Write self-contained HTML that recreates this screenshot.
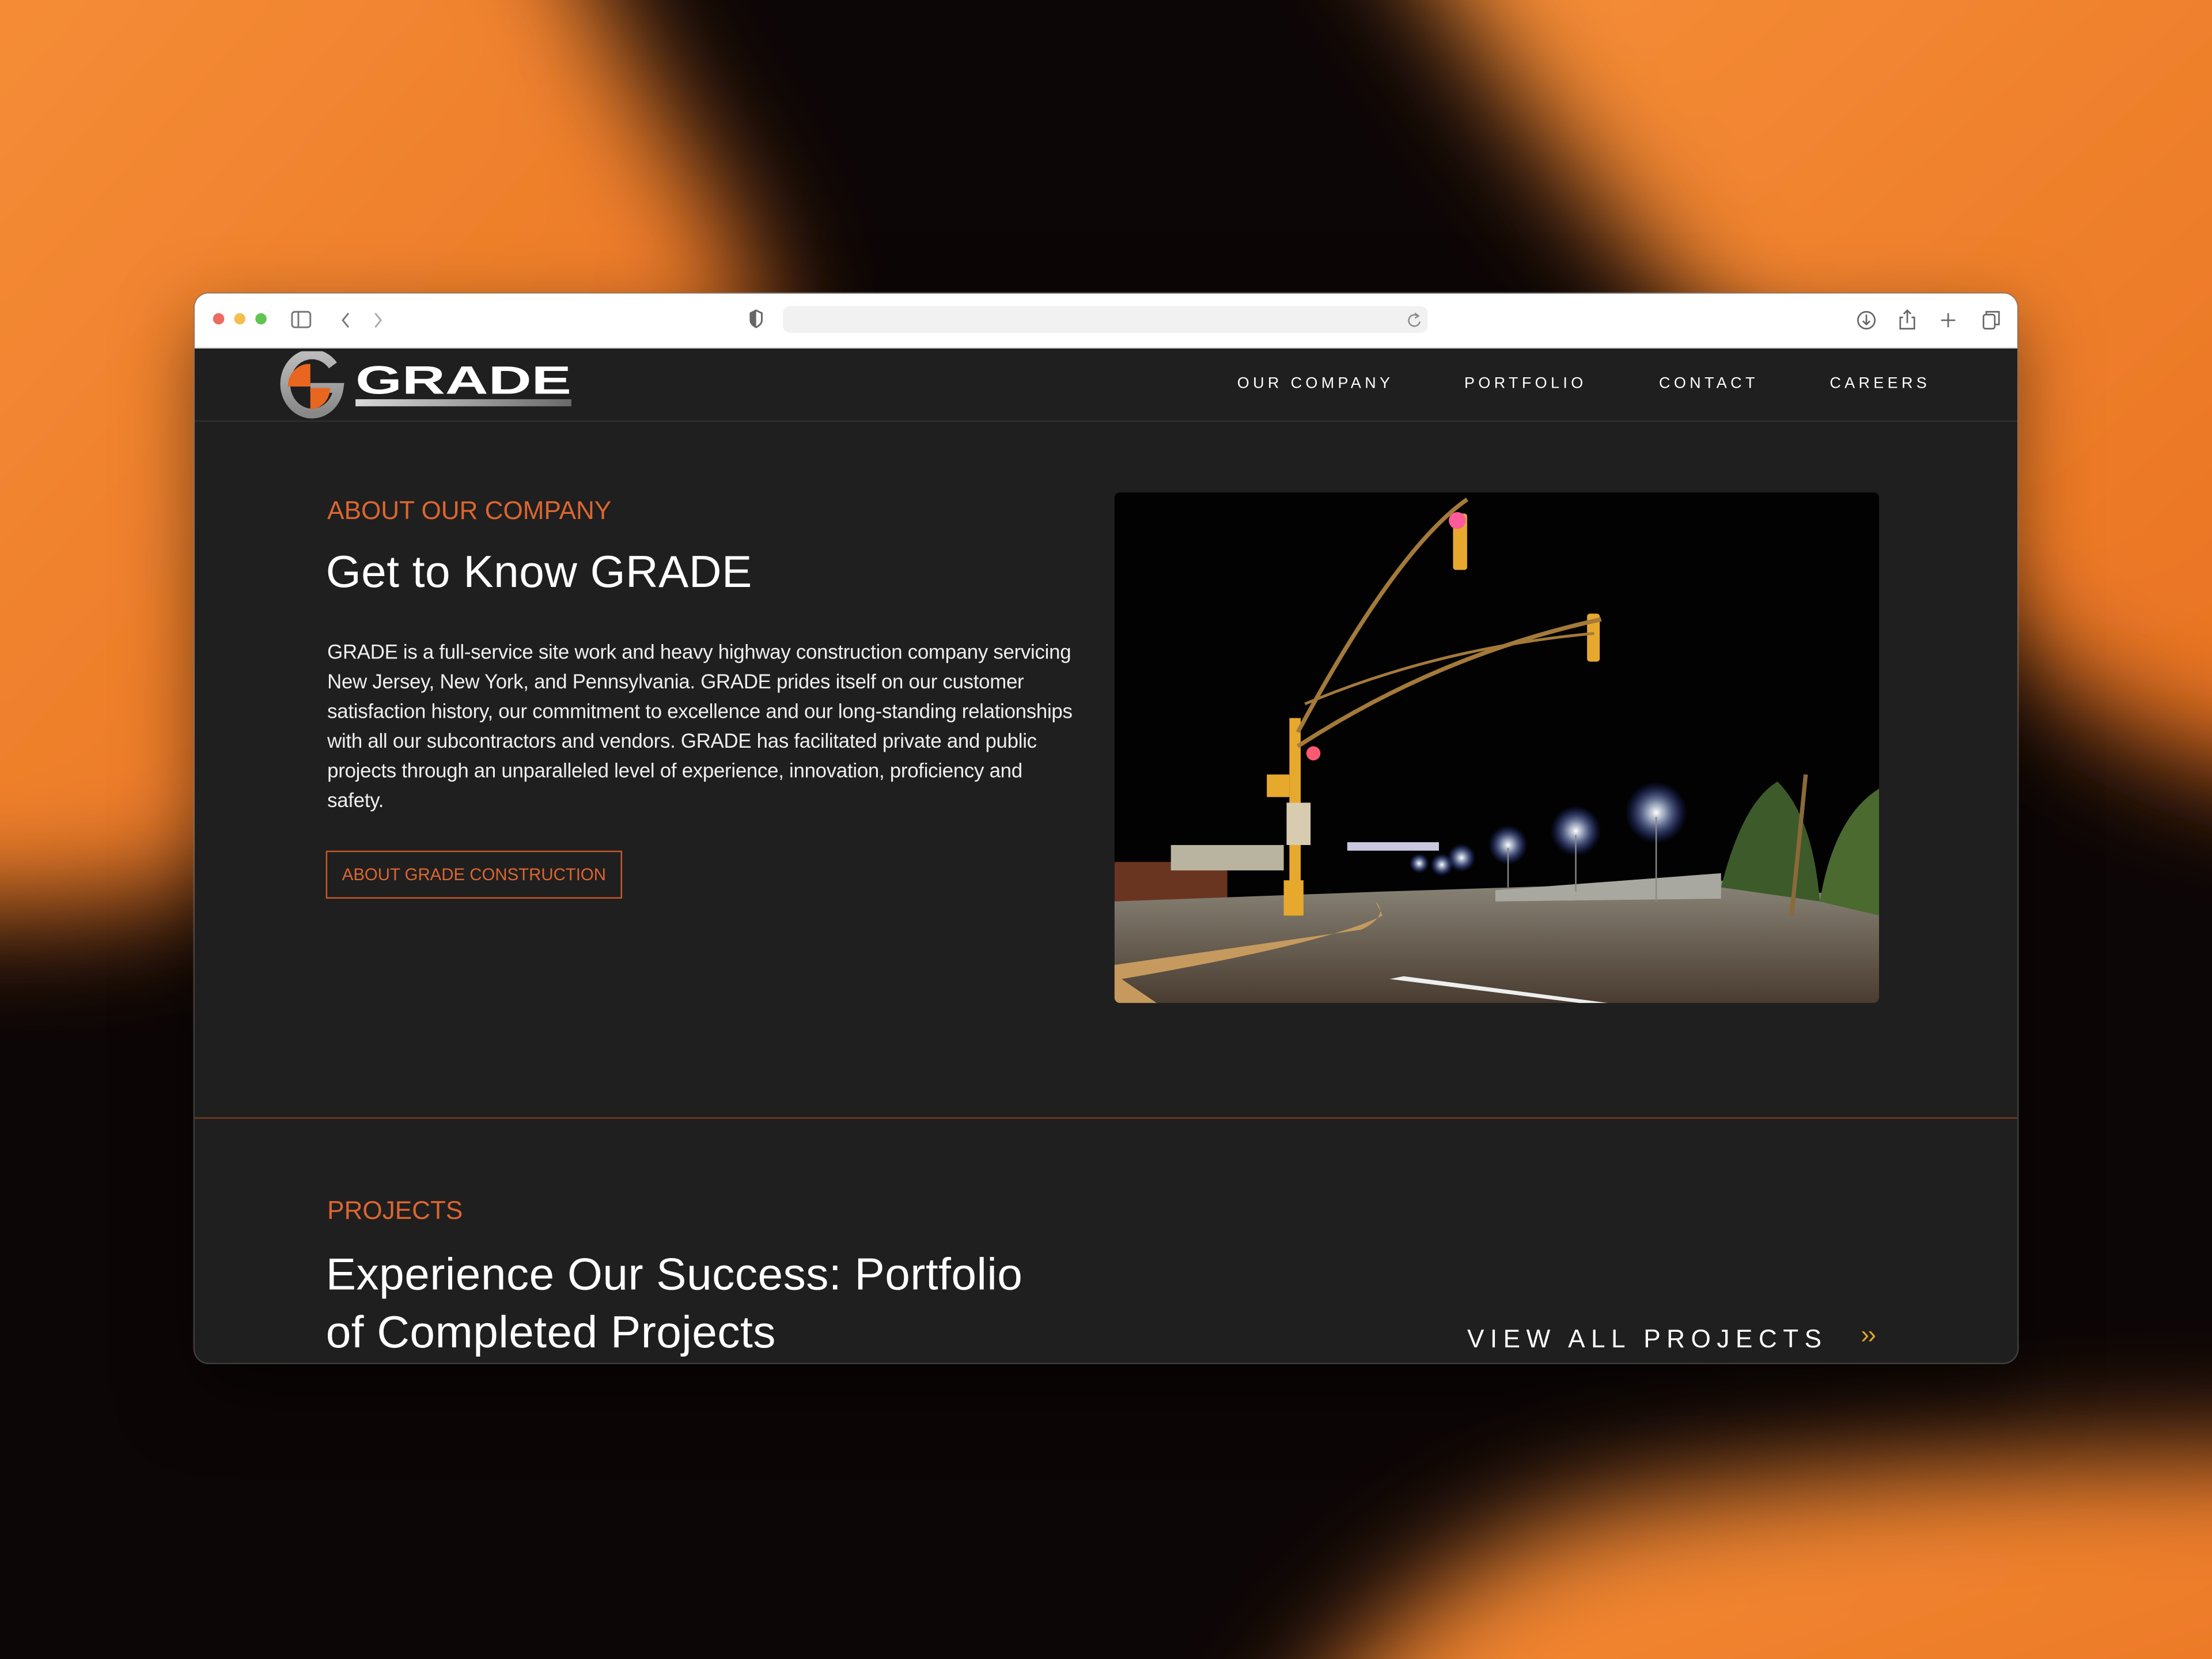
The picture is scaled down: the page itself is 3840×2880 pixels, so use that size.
<!DOCTYPE html>
<html><head><meta charset="utf-8"><style>
html,body{margin:0;padding:0;width:3840px;height:2880px;overflow:hidden;background:#0c0505;}
#w{position:absolute;left:0;top:0;width:1568px;height:1176px;overflow:hidden;transform:scale(2.44898);transform-origin:0 0;font-family:"Liberation Sans",sans-serif;}
.abs{position:absolute;}
.win{left:138px;top:208px;width:1292px;height:758px;border-radius:10px;overflow:hidden;background:#1f1f1f;box-shadow:0 0 0 1px rgba(120,120,120,.5),0 20px 60px rgba(0,0,0,.5);}
.tb{left:0;top:0;width:1292px;height:38px;background:#fff;border-bottom:1px solid #ddd;}
.dot{width:8px;height:8px;border-radius:50%;top:14px;}
.nav{top:58px;font-size:11px;letter-spacing:2.6px;color:#fff;white-space:nowrap;}
.or{color:#dd6630;}
.p{font-size:14.2px;color:#f0f0f0;white-space:nowrap;letter-spacing:-0.1px;}
.h{font-size:32px;color:#fff;white-space:nowrap;font-weight:normal;letter-spacing:0.2px;}
</style></head><body><div id="w">
<svg class="abs" style="left:0;top:0" width="1568" height="1176">
<defs><filter id="b" x="-30%" y="-30%" width="160%" height="160%"><feGaussianBlur stdDeviation="40"/></filter>
<linearGradient id="og" x1="0" y1="0" x2="1" y2="1"><stop offset="0" stop-color="#f7913a"/><stop offset="1" stop-color="#e8701f"/></linearGradient></defs>
<rect width="1568" height="1176" fill="#0d0606"/>
<g filter="url(#b)" fill="url(#og)">
<path d="M-100,-100 L380,-100 Q440,40 520,160 L560,300 L380,480 L240,600 Q100,660 -100,640 Z"/>
<path d="M960,-100 L1700,-100 L1700,560 Q1570,560 1480,500 L1320,380 Q1240,280 1170,190 Q1060,60 960,-100 Z"/>
<path d="M880,1300 Q970,1120 1130,1070 Q1300,1030 1700,1030 L1700,1300 Z"/>
</g>
</svg>
<div class="abs win">
 <div class="abs tb">
  <div class="abs dot" style="left:13px;background:#ec6a5e"></div>
  <div class="abs dot" style="left:28px;background:#f4bf4f"></div>
  <div class="abs dot" style="left:43px;background:#61c554"></div>
  <svg class="abs" style="left:68px;top:10px" width="140" height="18" fill="none" stroke="#777" stroke-width="1.2">
   <rect x="1" y="3" width="13" height="11" rx="2"/><line x1="5.5" y1="3" x2="5.5" y2="14"/>
   <path d="M41,4 L37,9 L41,14"/><path d="M60,4 L64,9 L60,14" stroke="#aaa"/>
  </svg>
  <svg class="abs" style="left:393px;top:11px" width="10" height="14"><path d="M5,1 L9,3 L9,8 Q9,11 5,13 Q1,11 1,8 L1,3Z" fill="none" stroke="#666" stroke-width="1.2"/><path d="M5,1 L1,3 L1,8 Q1,11 5,13Z" fill="#666"/></svg>
  <div class="abs" style="left:417px;top:9px;width:457px;height:19px;background:#f1f1f1;border-radius:5px;"></div>
  <svg class="abs" style="left:860px;top:13px" width="10" height="12"><path d="M7,3 A4,4 0 1 0 8.5,7" fill="none" stroke="#888" stroke-width="1"/><path d="M5,1 L7.5,3 L5,4.5" fill="none" stroke="#888" stroke-width="1"/></svg>
  <svg class="abs" style="left:1176px;top:10px" width="110" height="18" fill="none" stroke="#666" stroke-width="1.1">
   <circle cx="9" cy="9" r="6"/><path d="M9,5 L9,12 M6.5,9.5 L9,12 L11.5,9.5"/>
   <path d="M35,7 L33,7 L33,15 L43,15 L43,7 L41,7 M38,2 L38,11 M35.5,4.5 L38,2 L40.5,4.5"/>
   <path d="M67,4 L67,14 M62,9 L72,9"/>
   <rect x="92" y="5" width="8" height="10" rx="1.5"/><path d="M94,5 L94,3 L103,3 L103,12 L100,12"/>
  </svg>
 </div>
 <svg class="abs" style="left:58px;top:41px" width="220" height="48">
  <defs><linearGradient id="g1" x1="0" x2="1"><stop offset="0" stop-color="#d8d8d8"/><stop offset="1" stop-color="#6a6a6a"/></linearGradient>
  <linearGradient id="g2" x1="0" x2="0" y1="0" y2="1"><stop offset="0" stop-color="#bbb"/><stop offset="1" stop-color="#888"/></linearGradient></defs>
  <path d="M40,10 A19,21 0 1 0 44,26 L24,26" fill="none" stroke="url(#g2)" stroke-width="7"/>
  <path d="M24,9 A15,16 0 0 0 8,25 L24,25Z" fill="#e8661f"/>
  <path d="M24,26 L38,26 A14,15 0 0 1 24,41Z" fill="#e8661f"/>
  <text x="56" y="30" font-family="Liberation Sans" font-weight="bold" font-size="28" fill="#fff" textLength="153" lengthAdjust="spacingAndGlyphs">GRADE</text>
  <rect x="56" y="34" width="153" height="5" fill="url(#g1)"/>
 </svg>
 <div class="abs nav" style="left:739px">OUR COMPANY</div>
 <div class="abs nav" style="left:900px">PORTFOLIO</div>
 <div class="abs nav" style="left:1038px">CONTACT</div>
 <div class="abs nav" style="left:1159px">CAREERS</div>
 <div class="abs" style="left:0;top:90px;width:1292px;height:1px;background:#2e2e2e"></div>

 <div class="abs or" style="left:94px;top:144px;font-size:18px;white-space:nowrap">ABOUT OUR COMPANY</div>
 <div class="abs h" style="left:93px;top:179px">Get to Know GRADE</div>
 <div class="abs" style="left:94px;top:245px;line-height:20.9px">
  <div class="p">GRADE is a full-service site work and heavy highway construction company servicing</div>
  <div class="p">New Jersey, New York, and Pennsylvania. GRADE prides itself on our customer</div>
  <div class="p">satisfaction history, our commitment to excellence and our long-standing relationships</div>
  <div class="p">with all our subcontractors and vendors. GRADE has facilitated private and public</div>
  <div class="p">projects through an unparalleled level of experience, innovation, proficiency and</div>
  <div class="p">safety.</div>
 </div>
 <div class="abs or" style="left:93px;top:395px;width:208px;height:32px;border:1px solid #c8582a;font-size:12px;line-height:32px;text-align:center;white-space:nowrap">ABOUT GRADE CONSTRUCTION</div>

 <svg class="abs" style="left:652px;top:141px;border-radius:4px" width="542" height="362">
  <defs>
   <linearGradient id="rd" x1="0" y1="0" x2="0" y2="1"><stop offset="0" stop-color="#8a8578"/><stop offset="1" stop-color="#4a3c30"/></linearGradient>
   <radialGradient id="lt"><stop offset="0" stop-color="#fff"/><stop offset=".3" stop-color="#cfe0ff" stop-opacity=".7"/><stop offset="1" stop-color="#3050ff" stop-opacity="0"/></radialGradient>
  </defs>
  <rect width="542" height="362" fill="#020203"/>
  <path d="M0,262 L45,262 L80,258 L80,300 L0,300Z" fill="#6a3520"/>
  <rect x="40" y="250" width="80" height="18" fill="#b9b4a0"/>
  <path d="M0,290 L190,283 L440,275 L542,290 L542,362 L0,362Z" fill="url(#rd)"/>
  <path d="M185,290 Q195,300 175,310 L0,335 L0,362 L30,362 L5,345 Q150,320 190,300Z" fill="#c69a5e"/>
  <path d="M205,343 L350,362 L330,362 L195,345Z" fill="#eee"/>
  <path d="M270,282 L430,270 L430,288 L270,290Z" fill="#a8a8a0"/>
  <g fill="#e6a92e"><rect x="124" y="160" width="8" height="140"/><rect x="120" y="275" width="14" height="25"/>
   <rect x="240" y="15" width="10" height="40" rx="2"/><rect x="335" y="86" width="9" height="34" rx="2"/><rect x="108" y="200" width="16" height="16"/></g>
  <path d="M130,170 Q200,40 250,5" stroke="#a47a3a" stroke-width="3" fill="none"/>
  <path d="M130,180 Q230,115 345,90" stroke="#a47a3a" stroke-width="3" fill="none"/>
  <path d="M135,150 Q230,110 340,100" stroke="#a47a3a" stroke-width="2" fill="none"/>
  <circle cx="243" cy="20" r="6" fill="#ff5a9a"/><circle cx="141" cy="185" r="5" fill="#ff5a70"/>
  <rect x="122" y="220" width="17" height="30" fill="#d8ccb0"/>
  <g fill="url(#lt)"><circle cx="384" cy="227" r="22"/><circle cx="327" cy="240" r="18"/><circle cx="279" cy="250" r="14"/><circle cx="246" cy="259" r="10"/><circle cx="232" cy="264" r="8"/><circle cx="216" cy="263" r="7"/></g>
  <g stroke="#888" stroke-width="1"><line x1="384" y1="230" x2="384" y2="290"/><line x1="327" y1="243" x2="327" y2="283"/><line x1="279" y1="252" x2="279" y2="280"/></g>
  <path d="M430,280 Q445,220 470,205 Q495,230 500,290Z" fill="#3d5a2a"/>
  <path d="M500,290 Q510,230 542,210 L542,300Z" fill="#4a6a30"/>
  <line x1="480" y1="300" x2="490" y2="200" stroke="#8a6a3a" stroke-width="3"/>
  <rect x="165" y="248" width="65" height="6" fill="#c8c8e0"/>
 </svg>

 <div class="abs" style="left:0;top:584px;width:1292px;height:1px;background:#7a3a1e"></div>
 <div class="abs or" style="left:94px;top:640px;font-size:18px">PROJECTS</div>
 <div class="abs h" style="left:93px;top:675px;line-height:41px">Experience Our Success: Portfolio<br>of Completed Projects</div>
 <div class="abs" style="left:902px;top:731px;font-size:18px;letter-spacing:4.3px;color:#fff;white-space:nowrap">VIEW ALL PROJECTS</div>
 <div class="abs" style="left:1181px;top:728px;font-size:18px;color:#e0a92a;letter-spacing:-1px">&#8250;&#8250;</div>
</div>
</div></body></html>
